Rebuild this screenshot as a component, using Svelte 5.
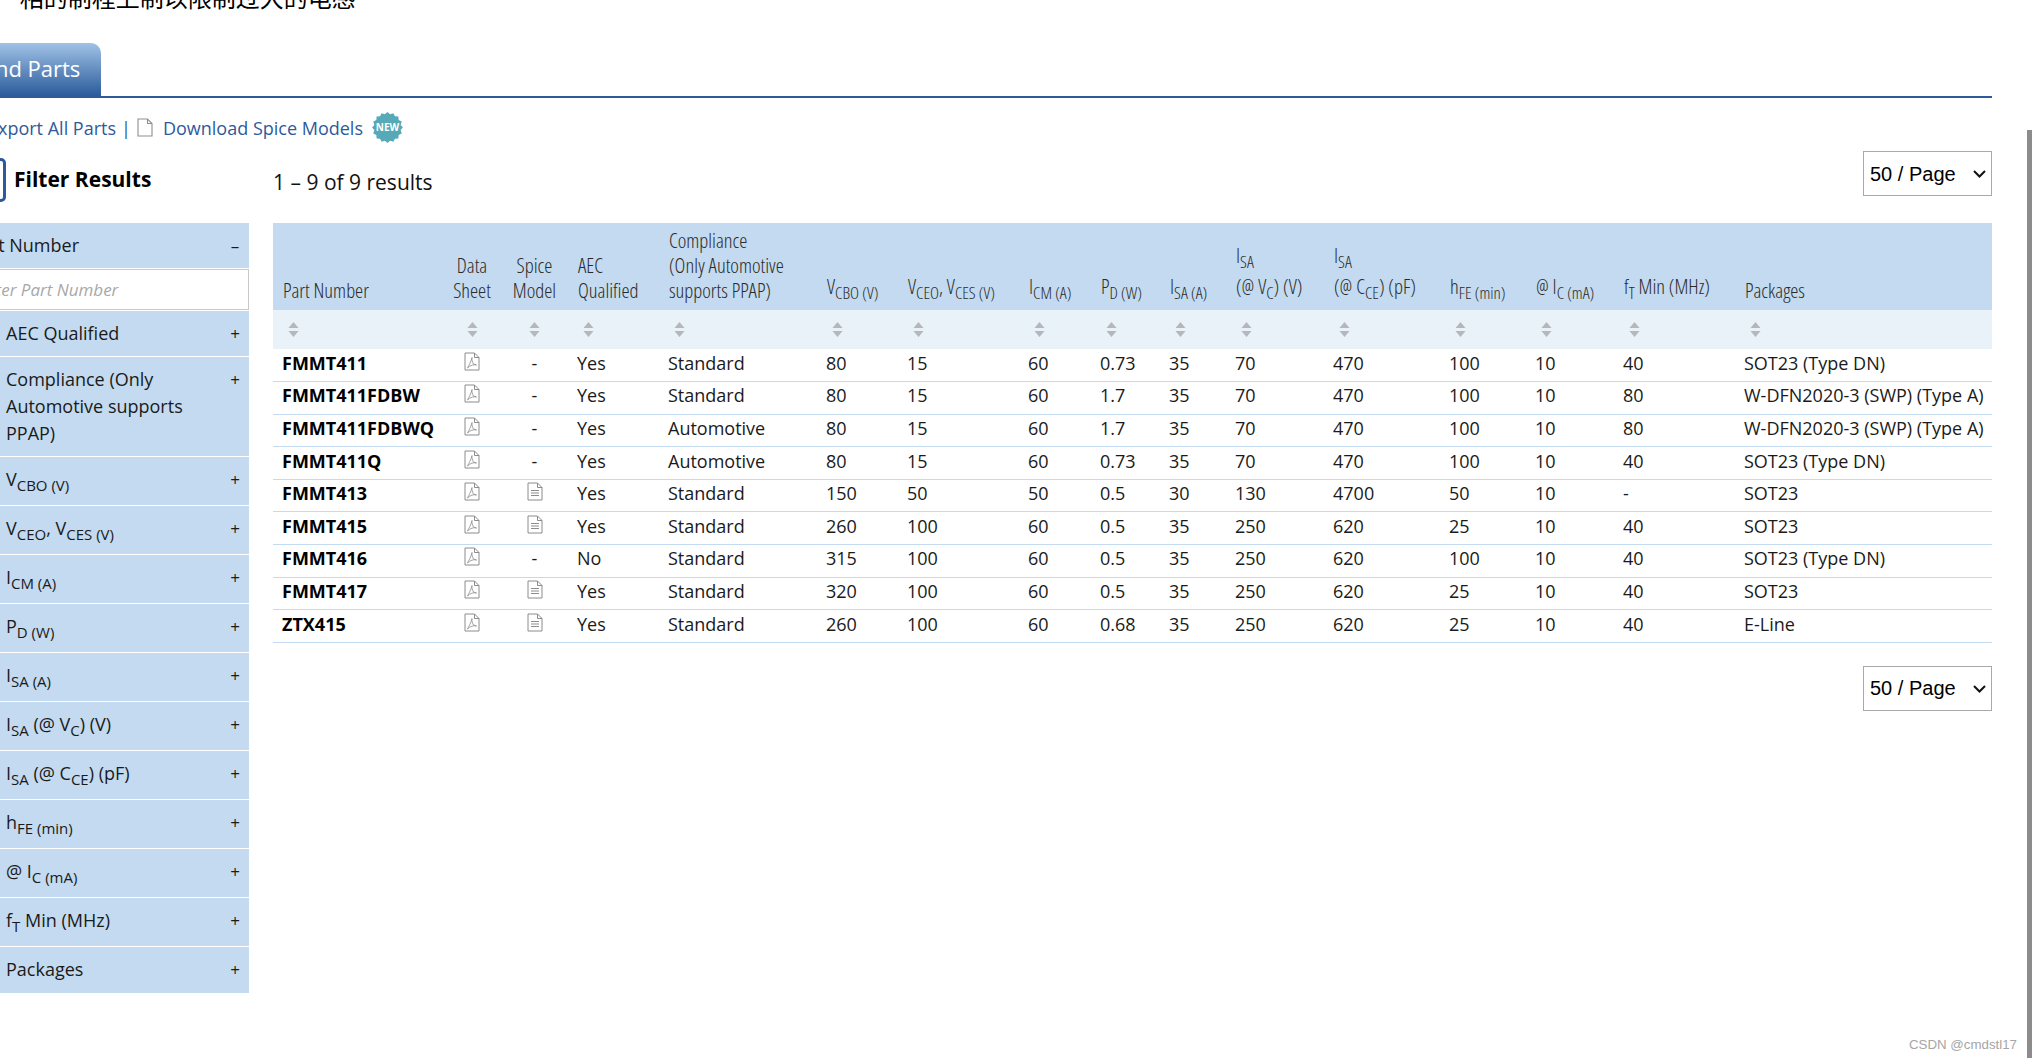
<script>
	const filters = [
		{ html: 'AEC Qualified', cls: 'short' },
		{ html: 'Compliance (Only Automotive supports PPAP)', cls: 'tall' },
		{ html: 'V<sub>CBO (V)</sub>' },
		{ html: 'V<sub>CEO</sub>, V<sub>CES (V)</sub>' },
		{ html: 'I<sub>CM (A)</sub>' },
		{ html: 'P<sub>D (W)</sub>' },
		{ html: 'I<sub>SA (A)</sub>' },
		{ html: 'I<sub>SA</sub> (@ V<sub>C</sub>) (V)' },
		{ html: 'I<sub>SA</sub> (@ C<sub>CE</sub>) (pF)' },
		{ html: 'h<sub>FE (min)</sub>' },
		{ html: '@ I<sub>C (mA)</sub>' },
		{ html: 'f<sub>T</sub> Min (MHz)' },
		{ html: 'Packages', cls: 'last' }
	];

	const columns = [
		{ w: 170, html: 'Part Number' },
		{ w: 58, html: 'Data<br>Sheet', center: true },
		{ w: 67, html: 'Spice<br>Model', center: true },
		{ w: 91, html: 'AEC<br>Qualified' },
		{ w: 158, html: 'Compliance<br>(Only Automotive<br>supports PPAP)' },
		{ w: 81, html: 'V<sub>CBO (V)</sub>' },
		{ w: 121, html: 'V<sub>CEO</sub>, V<sub>CES (V)</sub>' },
		{ w: 72, html: 'I<sub>CM (A)</sub>' },
		{ w: 69, html: 'P<sub>D (W)</sub>' },
		{ w: 66, html: 'I<sub>SA (A)</sub>' },
		{ w: 98, html: 'I<sub>SA</sub><br>(@ V<sub>C</sub>) (V)' },
		{ w: 116, html: 'I<sub>SA</sub><br>(@ C<sub>CE</sub>) (pF)' },
		{ w: 86, html: 'h<sub>FE (min)</sub>' },
		{ w: 88, html: '@ I<sub>C (mA)</sub>' },
		{ w: 121, html: 'f<sub>T</sub> Min (MHz)' },
		{ w: 257, html: 'Packages' }
	];

	// part, spice, aec, compliance, then the numeric columns and the package
	const rows = [
		['FMMT411', false, 'Yes', 'Standard', '80', '15', '60', '0.73', '35', '70', '470', '100', '10', '40', 'SOT23 (Type DN)'],
		['FMMT411FDBW', false, 'Yes', 'Standard', '80', '15', '60', '1.7', '35', '70', '470', '100', '10', '80', 'W-DFN2020-3 (SWP) (Type A)'],
		['FMMT411FDBWQ', false, 'Yes', 'Automotive', '80', '15', '60', '1.7', '35', '70', '470', '100', '10', '80', 'W-DFN2020-3 (SWP) (Type A)'],
		['FMMT411Q', false, 'Yes', 'Automotive', '80', '15', '60', '0.73', '35', '70', '470', '100', '10', '40', 'SOT23 (Type DN)'],
		['FMMT413', true, 'Yes', 'Standard', '150', '50', '50', '0.5', '30', '130', '4700', '50', '10', '-', 'SOT23'],
		['FMMT415', true, 'Yes', 'Standard', '260', '100', '60', '0.5', '35', '250', '620', '25', '10', '40', 'SOT23'],
		['FMMT416', false, 'No', 'Standard', '315', '100', '60', '0.5', '35', '250', '620', '100', '10', '40', 'SOT23 (Type DN)'],
		['FMMT417', true, 'Yes', 'Standard', '320', '100', '60', '0.5', '35', '250', '620', '25', '10', '40', 'SOT23'],
		['ZTX415', true, 'Yes', 'Standard', '260', '100', '60', '0.68', '35', '250', '620', '25', '10', '40', 'E-Line']
	];

	// scalloped edge of the NEW badge
	const badgePoints = Array.from({ length: 32 }, (_, i) => {
		const r = i % 2 ? 13.4 : 15.4;
		const a = (i / 32) * Math.PI * 2;
		return `${(15.5 + r * Math.cos(a)).toFixed(2)},${(15.5 + r * Math.sin(a)).toFixed(2)}`;
	}).join(' ');
</script>

{#snippet pageSelect()}
	<div class="select-wrap">
		<select class="per-page">
			<option>50 / Page</option>
		</select>
		<svg class="chevron" width="13" height="8" viewBox="0 0 13 8" fill="none" stroke="#111" stroke-width="2">
			<path d="M1 1l5.500 5.500L12 1" />
		</svg>
	</div>
{/snippet}

{#snippet sortIcon()}
	<svg class="sort" width="11" height="15" viewBox="0 0 11 15">
		<path d="M5.500 0 10.500 6H.5z M.5 9h10l-5 6z" fill="#b4b8bd" />
	</svg>
{/snippet}

<div class="page">
	<p class="intro">•&nbsp;&nbsp;相的制程上制以限制过大的电感</p>

	<div class="tabs">
		<div class="tab">Find Parts</div>
	</div>

	<div class="links">
		<a href="#export">Export All Parts</a>
		<span class="pipe">|</span>
		<svg width="16" height="19" viewBox="0 0 16 19" fill="none" stroke="#8f8f8f" stroke-width="1.1">
			<path d="M1 1h9.500L15 5.500V18H1z M10.500 1v4.500H15" />
		</svg>
		<a href="#spice" class="spice">Download Spice Models</a>
		<svg class="new" width="31" height="31" viewBox="0 0 31 31">
			<polygon points={badgePoints} fill="#56a9b7" />
			<text x="15.5" y="19" text-anchor="middle" fill="#fff">NEW</text>
		</svg>
	</div>

	<div class="content">
		<aside>
			<div class="filter-title">
				<span class="filter-icon"></span>
				<strong>Filter Results</strong>
			</div>
			<div class="filter first">
				<span>Part Number</span>
				<b class="sign">–</b>
			</div>
			<input class="part-input" placeholder="Enter Part Number" />
			{#each filters as f}
				<div class="filter {f.cls ?? ''}">
					<span>{@html f.html}</span>
					<b class="sign">+</b>
				</div>
			{/each}
		</aside>

		<main>
			<div class="result-bar">
				<span class="count">1 – 9 of 9 results</span>
				{@render pageSelect()}
			</div>

			<table>
				<colgroup>
					{#each columns as c}
						<col style="width: {c.w}px" />
					{/each}
				</colgroup>
				<thead>
					<tr class="head">
						{#each columns as c}
							<th class:center={c.center} class:has-sub={c.html.includes('<sub')}>
								<span class="narrow">{@html c.html}</span>
							</th>
						{/each}
					</tr>
					<tr class="sorts">
						{#each columns as c}
							<td class:center={c.center}>{@render sortIcon()}</td>
						{/each}
					</tr>
				</thead>
				<tbody>
					{#each rows as r}
						<tr>
							<td class="part">{r[0]}</td>
							<td class="center">
								<svg class="doc" width="16" height="19" viewBox="0 0 16 19" fill="none" stroke="#8c8c8c">
									<path d="M1 1h9.500L15 5.500V18H1z M10.500 1v4.500H15" />
									<path d="M8 5.500c-.5 2 .5 5 1.500 6.500l3 1c-2.500-.8-6.500.2-9 3 1.500-3 3.500-6 4.500-10.500z" stroke-width=".8" />
								</svg>
							</td>
							<td class="center">
								{#if r[1]}
									<svg class="doc" width="16" height="19" viewBox="0 0 16 19" fill="none" stroke="#8c8c8c">
										<path d="M1 1h9.500L15 5.500V18H1z M10.500 1v4.500H15" />
										<path d="M4 8.500h8M4 11h8M4 13.500h8" />
									</svg>
								{:else}
									-
								{/if}
							</td>
							{#each r.slice(2) as value}
								<td>{value}</td>
							{/each}
						</tr>
					{/each}
				</tbody>
			</table>

			<div class="bottom-bar">
				{@render pageSelect()}
			</div>
		</main>
	</div>

	<div class="scrollbar"></div>
	<div class="watermark">CSDN @cmdstl17</div>
</div>

<style>
	:global(body) {
		background: #fff;
		overflow: hidden;
	}

	.page {
		position: relative;
		width: 2032px;
		height: 1058px;
		overflow: hidden;
		font-family: 'Open Sans', 'Noto Sans CJK SC', sans-serif;
		font-size: 18px;
		color: #111;
	}

	.intro {
		margin: -17px 0 0 -15px;
		height: 60px;
		font-size: 24px;
		line-height: 28px;
		white-space: nowrap;
		color: #000;
		font-family: 'Noto Sans CJK SC', sans-serif;
	}

	.tabs {
		margin-left: -60px;
		width: 2052px;
		height: 53px;
		border-bottom: 2px solid #2d5a9c;
	}

	.tab {
		width: 123px;
		height: 53px;
		padding-left: 38px;
		border-radius: 0 10px 0 0;
		background: linear-gradient(#a0c2e6, #2a5b9b);
		color: #fff;
		font-size: 22px;
		line-height: 51px;
	}

	.links {
		display: flex;
		align-items: center;
		height: 31px;
		margin: 14px 0 0 -12px;
		font-size: 18px;
		color: #2d5a9c;
	}

	.links a {
		color: #2d5a9c;
		text-decoration: none;
	}

	.pipe {
		margin: 0 6px 0 5px;
	}

	.spice {
		margin-left: 10px;
		margin-right: 9px;
	}

	.new text {
		font-size: 10px;
		font-weight: 700;
	}

	.content {
		display: flex;
		margin-top: 11px;
		margin-left: -40px;
	}

	aside {
		width: 289px;
		flex: none;
		margin-right: 24px;
	}

	.filter-title {
		display: flex;
		align-items: center;
		gap: 8px;
		height: 69px;
		padding-bottom: 19px;
		box-sizing: border-box;
		margin-left: 30px;
	}

	.filter-icon {
		width: 16px;
		height: 44px;
		margin-top: 2px;
		border: 3px solid #2d5a9c;
		border-radius: 5px;
		box-sizing: border-box;
	}

	.filter-title strong {
		font-size: 21px;
		color: #000;
	}

	.filter {
		display: flex;
		justify-content: space-between;
		align-items: flex-start;
		height: 48px;
		margin-bottom: 1px;
		padding: 9px 9px 0 46px;
		box-sizing: border-box;
		background: #c3daf0;
		line-height: 27px;
		color: #1a1a1a;
	}

	.filter.first {
		padding-left: 10px;
		height: 45px;
	}

	.filter.short {
		height: 45px;
	}

	.filter.tall {
		height: 99px;
	}

	.filter.last {
		height: 46px;
		margin-bottom: 0;
	}

	.filter.tall span {
		width: 190px;
	}

	.filter sub {
		font-size: 13.5px;
		line-height: 0;
	}

	.sign {
		font-weight: 400;
		font-size: 17px;
		width: 10px;
		text-align: center;
	}

	.part-input {
		display: block;
		width: 100%;
		height: 41px;
		margin: 0 0 1px;
		padding: 0 0 0 17px;
		box-sizing: border-box;
		border: 1px solid #c9c9c9;
		border-left: 0;
		background: #fff;
		font: italic 17px 'Open Sans', sans-serif;
		outline: none;
	}

	.part-input::placeholder {
		color: #a8a8a8;
	}

	main {
		width: 1719px;
		flex: none;
	}

	.result-bar {
		display: flex;
		justify-content: space-between;
		height: 69px;
	}

	.count {
		font-size: 21px;
		line-height: 27px;
		padding-top: 15px;
	}

	.select-wrap {
		position: relative;
		width: 129px;
		height: 45px;
	}

	.per-page {
		appearance: none;
		width: 129px;
		height: 45px;
		padding: 0 0 0 6px;
		border: 1px solid #a9a9a9;
		border-radius: 0;
		background: #fff;
		font: 20px 'Liberation Sans', sans-serif;
		color: #000;
	}

	.chevron {
		position: absolute;
		right: 6px;
		top: 19px;
		pointer-events: none;
	}

	.result-bar .select-wrap {
		margin-top: -3px;
	}

	table {
		width: 1719px;
		table-layout: fixed;
		border-collapse: collapse;
	}

	th {
		height: 87px;
		box-sizing: border-box;
		padding: 0 0 7px 10px;
		background: #c3daf0;
		vertical-align: bottom;
		text-align: left;
		font-weight: 300;
		font-size: 20.5px;
		line-height: 25px;
		color: #2a2a2a;
		white-space: nowrap;
	}

	th.has-sub {
		padding-bottom: 5px;
	}

	th.center,
	td.center {
		text-align: center;
		padding-left: 0;
	}

	.narrow {
		font-stretch: 75%;
	}

	/* lowered by hand: a real sub would make the header's line box taller */
	th sub {
		position: relative;
		top: 4px;
		vertical-align: baseline;
		font-size: 16px;
		line-height: 0;
	}

	.sorts td {
		height: 39px;
		padding: 0 0 4px 15px;
		background: #e9f1f9;
		border: 0;
		vertical-align: middle;
	}

	.sorts td.center {
		padding-left: 0;
	}

	.sort {
		display: inline-block;
		vertical-align: middle;
	}

	td {
		height: 32.6px;
		padding: 0 0 5px 9px;
		box-sizing: border-box;
		border-bottom: 1px solid #c3daf0;
		line-height: 24px;
		white-space: nowrap;
		color: #1a1a1a;
	}

	td.part {
		font-weight: 700;
		color: #000;
	}

	.doc {
		display: inline-block;
		vertical-align: -1px;
	}

	.bottom-bar {
		display: flex;
		justify-content: flex-end;
		margin-top: 23px;
	}

	.scrollbar {
		position: absolute;
		top: 130px;
		right: 0;
		bottom: 0;
		width: 5px;
		background: #8c8c8c;
	}

	.watermark {
		position: absolute;
		right: 15px;
		bottom: 6px;
		font: 13.3px 'Liberation Sans', sans-serif;
		color: #a6a6a6;
	}
</style>
